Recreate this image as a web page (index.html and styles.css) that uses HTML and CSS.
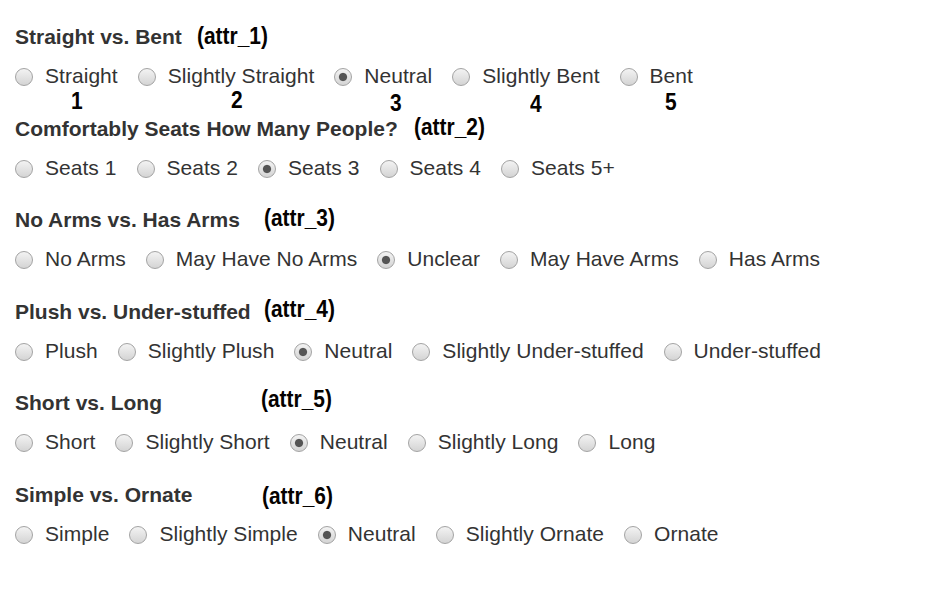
FILE: index.html
```html
<!DOCTYPE html>
<html>
<head>
<meta charset="utf-8">
<link rel="stylesheet" href="styles.css">
</head>
<body>
<div class="page">
  <div class="group">
    <div class="heading">Straight vs. Bent</div>
    <div class="options">
      <label class="opt"><input type="radio" name="a1"><span>Straight</span></label>
      <label class="opt"><input type="radio" name="a1"><span>Slightly Straight</span></label>
      <label class="opt"><input type="radio" name="a1" checked><span>Neutral</span></label>
      <label class="opt"><input type="radio" name="a1"><span>Slightly Bent</span></label>
      <label class="opt"><input type="radio" name="a1"><span>Bent</span></label>
    </div>
  </div>
  <div class="group">
    <div class="heading">Comfortably Seats How Many People?</div>
    <div class="options">
      <label class="opt"><input type="radio" name="a2"><span>Seats 1</span></label>
      <label class="opt"><input type="radio" name="a2"><span>Seats 2</span></label>
      <label class="opt"><input type="radio" name="a2" checked><span>Seats 3</span></label>
      <label class="opt"><input type="radio" name="a2"><span>Seats 4</span></label>
      <label class="opt"><input type="radio" name="a2"><span>Seats 5+</span></label>
    </div>
  </div>
  <div class="group">
    <div class="heading">No Arms vs. Has Arms</div>
    <div class="options">
      <label class="opt"><input type="radio" name="a3"><span>No Arms</span></label>
      <label class="opt"><input type="radio" name="a3"><span>May Have No Arms</span></label>
      <label class="opt"><input type="radio" name="a3" checked><span>Unclear</span></label>
      <label class="opt"><input type="radio" name="a3"><span>May Have Arms</span></label>
      <label class="opt"><input type="radio" name="a3"><span>Has Arms</span></label>
    </div>
  </div>
  <div class="group">
    <div class="heading">Plush vs. Under-stuffed</div>
    <div class="options">
      <label class="opt"><input type="radio" name="a4"><span>Plush</span></label>
      <label class="opt"><input type="radio" name="a4"><span>Slightly Plush</span></label>
      <label class="opt"><input type="radio" name="a4" checked><span>Neutral</span></label>
      <label class="opt"><input type="radio" name="a4"><span>Slightly Under-stuffed</span></label>
      <label class="opt"><input type="radio" name="a4"><span>Under-stuffed</span></label>
    </div>
  </div>
  <div class="group">
    <div class="heading">Short vs. Long</div>
    <div class="options">
      <label class="opt"><input type="radio" name="a5"><span>Short</span></label>
      <label class="opt"><input type="radio" name="a5"><span>Slightly Short</span></label>
      <label class="opt"><input type="radio" name="a5" checked><span>Neutral</span></label>
      <label class="opt"><input type="radio" name="a5"><span>Slightly Long</span></label>
      <label class="opt"><input type="radio" name="a5"><span>Long</span></label>
    </div>
  </div>
  <div class="group">
    <div class="heading">Simple vs. Ornate</div>
    <div class="options">
      <label class="opt"><input type="radio" name="a6"><span>Simple</span></label>
      <label class="opt"><input type="radio" name="a6"><span>Slightly Simple</span></label>
      <label class="opt"><input type="radio" name="a6" checked><span>Neutral</span></label>
      <label class="opt"><input type="radio" name="a6"><span>Slightly Ornate</span></label>
      <label class="opt"><input type="radio" name="a6"><span>Ornate</span></label>
    </div>
  </div>

  <span class="note n-a1">(attr_1)</span>
  <span class="note n-a2">(attr_2)</span>
  <span class="note n-a3">(attr_3)</span>
  <span class="note n-a4">(attr_4)</span>
  <span class="note n-a5">(attr_5)</span>
  <span class="note n-a6">(attr_6)</span>
  <span class="note d1">1</span>
  <span class="note d2">2</span>
  <span class="note d3">3</span>
  <span class="note d4">4</span>
  <span class="note d5">5</span>
</div>
</body>
</html>
```

FILE: styles.css
```css
html, body {
  margin: 0;
  padding: 0;
  background: #fff;
}

.page {
  position: relative;
  padding: 22px 15px 0 15px;
  font-family: "Liberation Sans", Arial, sans-serif;
  font-size: 21px;
  color: #333;
  height: 569px;
}

.group {
  margin-bottom: 22.5px;
}

.heading {
  font-weight: bold;
  line-height: 30px;
  height: 30px;
  white-space: nowrap;
}

.options {
  display: flex;
  gap: 20px;
  margin-top: 9px;
  margin-left: 0px;
  height: 30px;
  line-height: 30px;
  white-space: nowrap;
  letter-spacing: 0.04px;
}

.opt {
  display: inline-flex;
  align-items: center;
  gap: 12px;
}

.opt input {
  -webkit-appearance: none;
  appearance: none;
  margin: 2px 0 0 0;
  width: 18px;
  height: 18px;
  flex: none;
  box-sizing: border-box;
  border: 1px solid #a3a3a3;
  border-radius: 50%;
  background: linear-gradient(#f3f3f3, #d4d4d4);
}

.opt input:checked {
  background:
    radial-gradient(circle, #555 0, #555 3.6px, rgba(85,85,85,0) 4.6px),
    linear-gradient(#f3f3f3, #d4d4d4);
}

.note {
  position: absolute;
  font-family: "Liberation Sans", Arial, sans-serif;
  font-weight: bold;
  font-size: 23px;
  line-height: 26px;
  color: #050200;
  transform: scaleX(0.91);
  transform-origin: left center;
  white-space: nowrap;
}

.n-a1 { left: 197px; top: 23px; }
.n-a2 { left: 414px; top: 114px; }
.n-a3 { left: 264px; top: 205px; }
.n-a4 { left: 264px; top: 296px; }
.n-a5 { left: 261px; top: 386px; }
.n-a6 { left: 262px; top: 483px; }

.d1 { left: 71px; top: 88px; }
.d2 { left: 231px; top: 87px; }
.d3 { left: 390px; top: 90px; }
.d4 { left: 530px; top: 91px; }
.d5 { left: 665px; top: 89px; }
```
